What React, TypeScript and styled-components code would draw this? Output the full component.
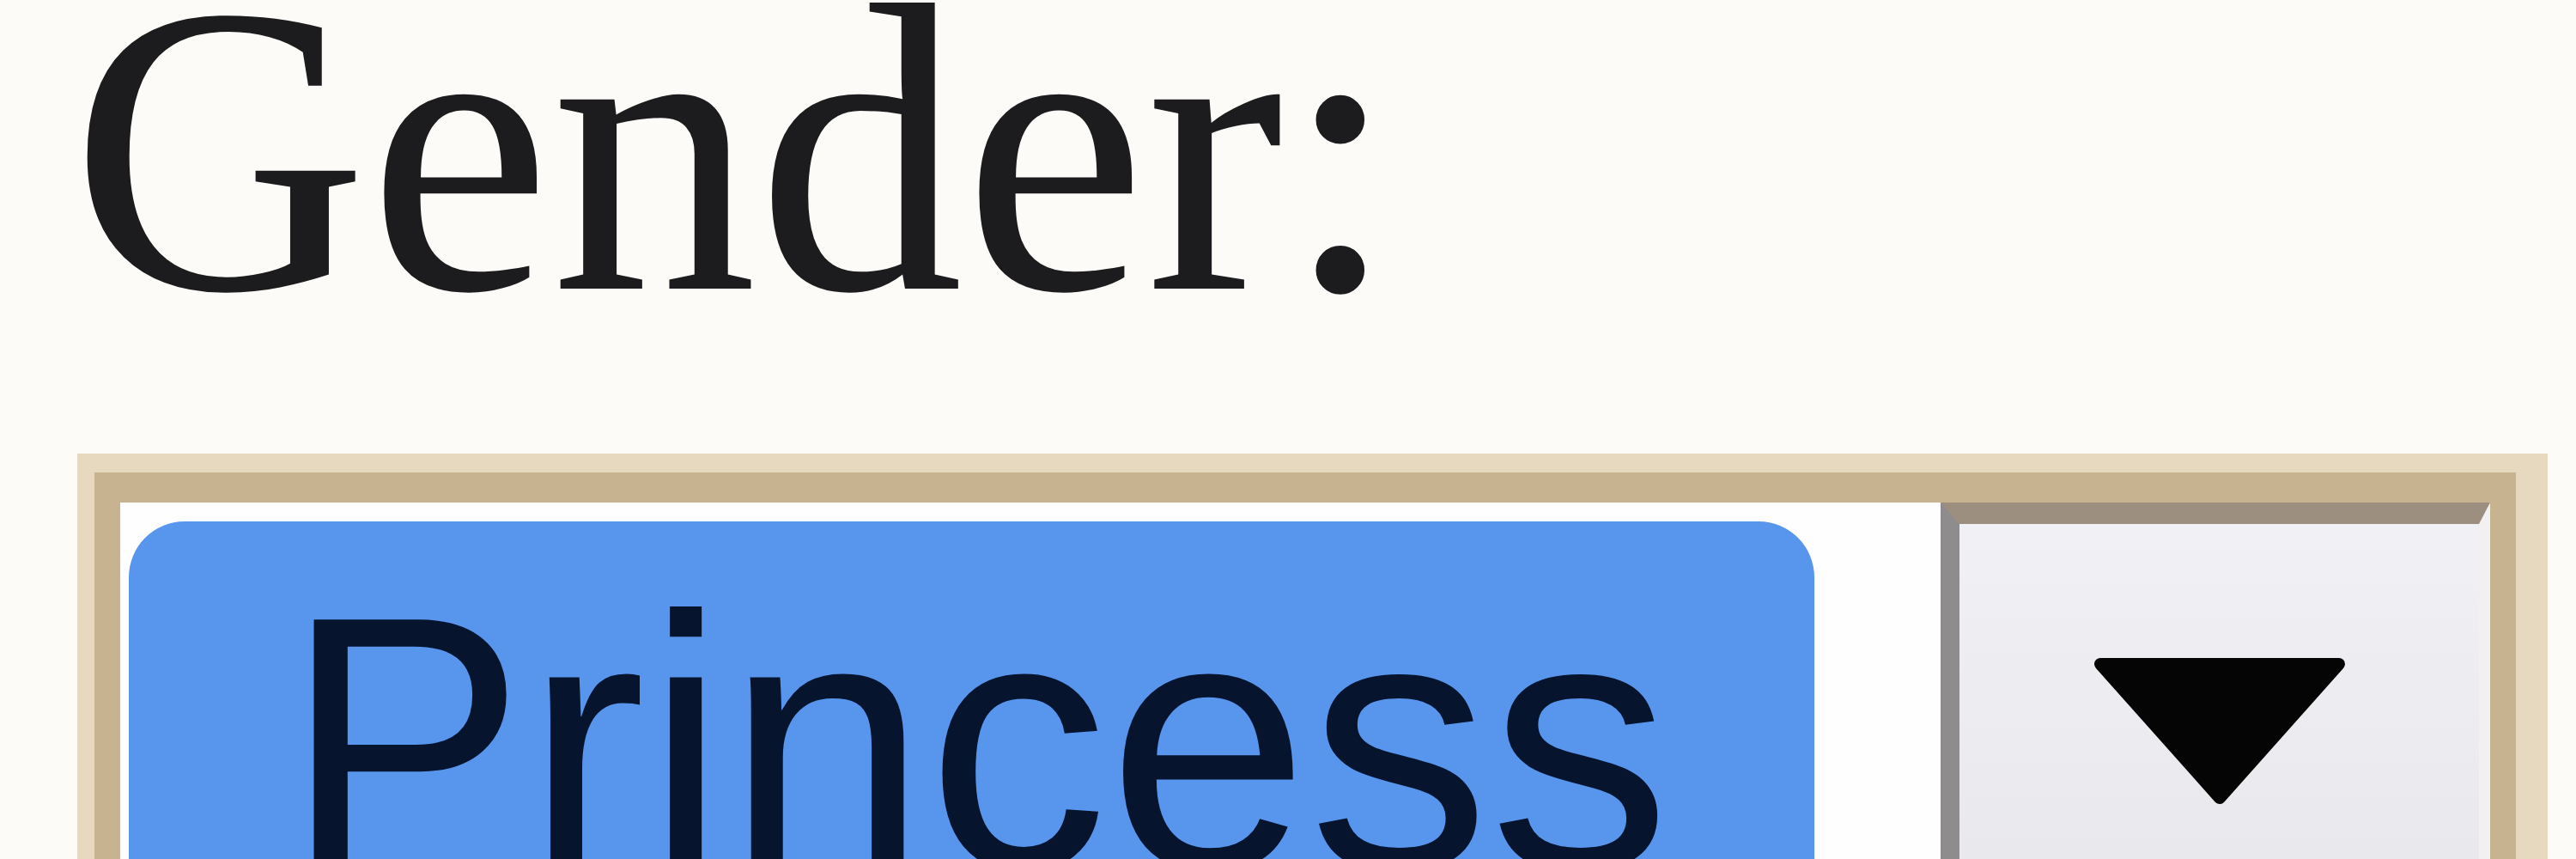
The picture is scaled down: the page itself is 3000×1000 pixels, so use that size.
import styled, { createGlobalStyle } from "styled-components";

const GlobalStyle = createGlobalStyle`
  html, body {
    margin: 0;
    padding: 0;
    background: #fcfbf7;
    overflow: hidden;
  }
`;

const Page = styled.div`
  width: 3000px;
  height: 1000px;
  overflow: hidden;
  display: flex;
  flex-direction: column;
  align-items: flex-start;
`;

const Label = styled.label`
  display: block;
  margin-left: 82px;
  padding-top: 6px;
  font-family: "Liberation Serif", "Times New Roman", serif;
  font-size: 480px;
  line-height: 336px;
  color: #1c1b1d;
`;

const Frame = styled.div`
  margin-top: 186px;
  margin-left: 90px;
  width: 2877px;
  box-sizing: border-box;
  border: 22px solid #e6d9bf;
  border-left-width: 20px;
  border-right-width: 37px;
`;

const Inner = styled.div`
  display: flex;
  border: 30px solid #c7b390;
  border-top-width: 35px;
  border-bottom: none;
  height: 700px;
`;

const Field = styled.div`
  flex: 1;
  background: #fefefe;
  padding: 22px 147px 0 10px;
`;

const Highlight = styled.div`
  height: 100%;
  background: #5896ee;
  border-radius: 65px 65px 0 0;
  padding: 48px 0 0 181px;
  box-sizing: border-box;
  font-family: "Liberation Sans", Arial, sans-serif;
  font-size: 421px;
  line-height: 1;
  color: #06142e;
`;

const DropButton = styled.div`
  width: 640px;
  box-sizing: border-box;
  border-left: 22px solid #8f8c8e;
  border-top: 25px solid #9d8f80;
  border-right: 13px solid #f2f0f0;
  background: linear-gradient(180deg, #f1f0f4 0%, #e3e3e7 100%);
  display: flex;
  justify-content: center;
  padding-top: 155px;
`;

const Arrow = () => (
  <svg width="294" height="172" viewBox="0 0 294 172">
    <polygon
      points="8,8 286,8 147,164"
      fill="#050505"
      stroke="#050505"
      strokeWidth="14"
      strokeLinejoin="round"
    />
  </svg>
);

export default function App() {
  return (
    <>
      <GlobalStyle />
      <Page>
        <Label>Gender:</Label>
        <Frame>
          <Inner>
            <Field>
              <Highlight>Princess</Highlight>
            </Field>
            <DropButton>
              <Arrow />
            </DropButton>
          </Inner>
        </Frame>
      </Page>
    </>
  );
}
